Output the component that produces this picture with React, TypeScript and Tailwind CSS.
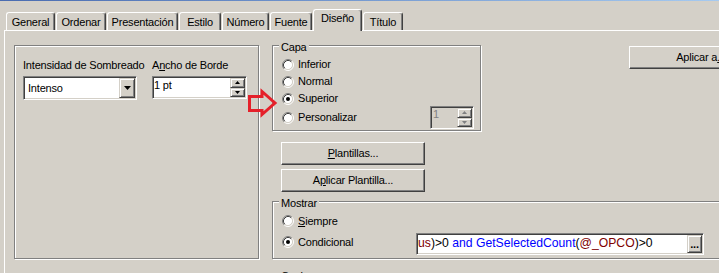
import React from "react";

const etched = "border border-[#808080] shadow-[inset_1px_1px_0_#fff,1px_1px_0_#fff]";
const sunken =
  "border border-t-[#808080] border-l-[#808080] border-r-white border-b-white shadow-[inset_1px_1px_0_#404040,inset_-1px_-1px_0_#d4d0c8]";
const raised =
  "bg-[#d4d0c8] border border-t-white border-l-white border-r-[#404040] border-b-[#404040] shadow-[inset_-1px_-1px_0_#808080]";
const smallRaised =
  "bg-[#d4d0c8] border border-t-[#d4d0c8] border-l-[#d4d0c8] border-r-[#404040] border-b-[#404040] shadow-[inset_1px_1px_0_#fff,inset_-1px_-1px_0_#808080]";

const tabs: { label: string; w: string; sel?: boolean }[] = [
  { label: "General", w: "w-[49px]" },
  { label: "Ordenar", w: "w-[50px]" },
  { label: "Presentación", w: "w-[71px]" },
  { label: "Estilo", w: "w-[42px]" },
  { label: "Número", w: "w-[47px]" },
  { label: "Fuente", w: "w-[42px]" },
  { label: "Diseño", w: "w-[49px]", sel: true },
  { label: "Título", w: "w-[40px]" },
];

function Radio({ checked }: { checked?: boolean }) {
  return (
    <svg width="12" height="12" viewBox="0 0 12 12" className="shrink-0">
      <circle cx="6" cy="6" r="4.5" fill="#fff" />
      <path d="M9.89 2.11A5.5 5.5 0 0 0 2.11 9.89" stroke="#808080" fill="none" />
      <path d="M2.11 9.89A5.5 5.5 0 0 0 9.89 2.11" stroke="#fff" fill="none" />
      <path d="M9.18 2.82A4.5 4.5 0 0 0 2.82 9.18" stroke="#404040" fill="none" />
      <path d="M2.82 9.18A4.5 4.5 0 0 0 9.18 2.82" stroke="#d4d0c8" fill="none" />
      {checked && <circle cx="6" cy="6" r="2" fill="#000" />}
    </svg>
  );
}

function SpinBtn({ up, disabled }: { up?: boolean; disabled?: boolean }) {
  const c = disabled ? "#808080" : "#000";
  return (
    <div className={`flex flex-1 items-center justify-center ${smallRaised}`}>
      <svg width="5" height="3" viewBox="0 0 5 3">
        {up ? <polygon points="2.5,0 5,3 0,3" fill={c} /> : <polygon points="0,0 5,0 2.5,3" fill={c} />}
      </svg>
    </div>
  );
}

function Legend({ children }: { children: React.ReactNode }) {
  return (
    <span className="absolute -top-[5px] left-[6px] bg-[#d4d0c8] px-[2px] whitespace-nowrap">{children}</span>
  );
}

function RadioRow({ label, checked }: { label: React.ReactNode; checked?: boolean }) {
  return (
    <div className="flex h-[17px] items-center gap-[4px]">
      <Radio checked={checked} />
      <span className="whitespace-nowrap">{label}</span>
    </div>
  );
}

function LeftGroup() {
  return (
    <div className={`h-[214px] w-[245px] shrink-0 ${etched} pl-[8px] pt-[13px]`}>
      <div className="flex">
        <div className="w-[129px] shrink-0">
          <div className="whitespace-nowrap">Intensidad de Sombreado</div>
          <div className={`mt-[4px] flex h-[24px] w-[114px] bg-white p-[1px] ${sunken}`}>
            <div className="flex flex-1 items-center pl-[3px]">Intenso</div>
            <div className={`flex w-[16px] items-center justify-center ${smallRaised}`}>
              <svg width="7" height="4" viewBox="0 0 7 4">
                <polygon points="0,0 7,0 3.5,4" fill="#000" />
              </svg>
            </div>
          </div>
        </div>
        <div>
          <div className="whitespace-nowrap">
            A<u>n</u>cho de Borde
          </div>
          <div className={`mt-[4px] flex h-[23px] w-[95px] bg-white p-[1px] ${sunken}`}>
            <div className="flex-1 pt-[1px]">1 pt</div>
            <div className="flex w-[15px] flex-col">
              <SpinBtn up />
              <SpinBtn />
            </div>
          </div>
        </div>
      </div>
    </div>
  );
}

function Capa() {
  return (
    <div className={`relative h-[86px] w-[209px] shrink-0 ${etched} pl-[9px] pr-[6px] pt-[10px]`}>
      <Legend>Capa</Legend>
      <RadioRow label="Inferior" />
      <RadioRow label="Normal" />
      <RadioRow label="Superior" checked />
      <div className="-mt-px flex h-[23px] items-center">
        <div className="flex items-center gap-[4px]">
          <Radio />
          <span>Personalizar</span>
        </div>
        <div className={`ml-auto flex h-[23px] w-[44px] bg-[#d4d0c8] p-[1px] ${sunken}`}>
          <div className="flex-1 pl-[1px] text-[#808080]">1</div>
          <div className="flex w-[15px] flex-col">
            <SpinBtn up disabled />
            <SpinBtn disabled />
          </div>
        </div>
      </div>
    </div>
  );
}

function Mostrar() {
  return (
    <div className={`relative mt-[9px] h-[58px] w-[460px] shrink-0 ${etched} pl-[9px] pt-[10px]`}>
      <Legend>Mostrar</Legend>
      <div className="flex h-[18px] items-center gap-[4px]">
        <Radio />
        <span>
          <u>S</u>iempre
        </span>
      </div>
      <div className="mt-[3px] flex items-start">
        <div className="flex h-[18px] w-[134px] items-center gap-[4px]">
          <Radio checked />
          <span>Condicional</span>
        </div>
        <div className={`flex h-[22px] w-[288px] bg-white p-[1px] ${sunken}`}>
          <div className="flex-1 overflow-hidden whitespace-nowrap pt-[1px] text-[12.2px] leading-[14px] tracking-normal">
            <span className="text-[#800000]">us</span>
            <span>)&gt;0 </span>
            <span className="text-[#0000ff]">and GetSelectedCount</span>
            <span>(</span>
            <span className="text-[#800000]">@_OPCO</span>
            <span>)&gt;0</span>
          </div>
          <div className={`flex h-full w-[15px] items-end justify-center pb-[2px] text-[11px] leading-none font-bold ${smallRaised}`}>
            ...
          </div>
        </div>
      </div>
    </div>
  );
}

function Btn({ className, children }: { className: string; children: React.ReactNode }) {
  return (
    <div className={`flex shrink-0 items-center justify-center whitespace-nowrap ${raised} ${className}`}>
      {children}
    </div>
  );
}

export default function App() {
  return (
    <div className="relative flex h-[273px] w-[719px] flex-col overflow-hidden bg-[#d4d0c8] font-['Liberation_Sans',Arial,sans-serif] text-[11px] leading-[13px] tracking-[-0.2px] text-black">
      <div className="h-px shrink-0 bg-linear-to-r from-[#4a6cb0] to-[#a6caf0]" />
      <div className="h-[8px] shrink-0" />
      <div className="relative z-10 flex h-[21px] shrink-0 items-end gap-[1px] pl-[6px]">
        {tabs.map((t) =>
          t.sel ? (
            <div
              key={t.label}
              className={`${t.w} -mb-px flex h-[22px] shrink-0 justify-center whitespace-nowrap rounded-t-[3px] border-l border-r border-t border-l-white border-r-[#404040] border-t-white bg-[#d4d0c8] pt-[2px] shadow-[inset_-1px_0_0_#808080]`}
            >
              {t.label}
            </div>
          ) : (
            <div
              key={t.label}
              className={`${t.w} flex h-[18px] shrink-0 justify-center whitespace-nowrap rounded-t-[3px] border-l border-r border-t border-l-white border-r-[#404040] border-t-white pt-[3px] shadow-[inset_-1px_0_0_#808080]`}
            >
              {t.label}
            </div>
          )
        )}
      </div>
      <div className="ml-[4px] flex flex-1 border-l border-t border-white pl-[9px] pt-[14px]">
        <LeftGroup />
        <div className="ml-[13px] flex w-[470px] shrink-0 flex-col">
          <div className="flex items-start">
            <Capa />
            <Btn className="ml-[148px] mt-[1px] h-[23px] w-[144px]">
              Aplicar a<u>.</u>..
            </Btn>
          </div>
          <Btn className="ml-[9px] mt-[11px] h-[23px] w-[144px]">
            <span>
              <u>P</u>lantillas...
            </span>
          </Btn>
          <Btn className="ml-[9px] mt-[4px] h-[23px] w-[144px]">
            <span>
              A<u>p</u>licar Plantilla...
            </span>
          </Btn>
          <Mostrar />
          <div className={`relative mt-[15px] h-[60px] w-[460px] shrink-0 ${etched}`}>
            <Legend>Opciones</Legend>
          </div>
        </div>
      </div>
      <svg
        className="absolute left-[246px] top-[87px]"
        width="34"
        height="32"
        viewBox="246 87 34 32"
      >
        <polygon
          points="249.5,96.5 262,96.5 262,91.5 275,103 262,114.5 262,110.5 249.5,110.5"
          fill="none"
          stroke="#e5202a"
          strokeWidth="3"
          strokeLinejoin="miter"
        />
      </svg>
    </div>
  );
}
